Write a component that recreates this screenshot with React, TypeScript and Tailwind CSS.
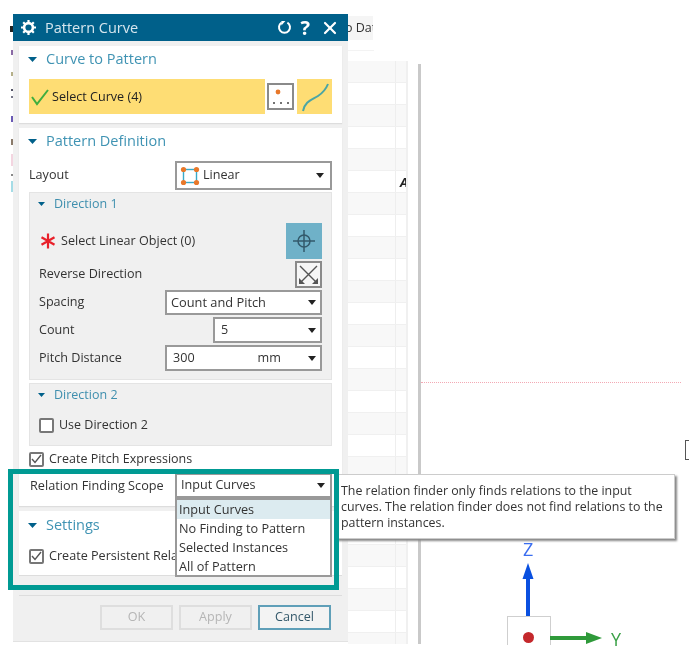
import { X } from 'lucide-react';

const gridRows = Array.from({ length: 27 }, (_, i) => i);

function Caret() {
  return (
    <svg width="8" height="5" viewBox="0 0 8 5" className="shrink-0">
      <path d="M0 0h8L4 5z" fill="#222" />
    </svg>
  );
}

function SectionHeader({ title }: { title: string }) {
  return (
    <div className="flex items-center h-[26px] pl-[9px]">
      <svg width="9" height="5" viewBox="0 0 9 5" className="mr-[9px]">
        <path d="M0 0h9L4.5 5z" fill="#00608a" />
      </svg>
      <span className="text-[14.5px] text-[#3f93b3]">{title}</span>
    </div>
  );
}

function SubHeader({ title }: { title: string }) {
  return (
    <div className="flex items-center h-[22px] pl-[8px]">
      <svg width="7" height="4" viewBox="0 0 7 4" className="mr-[9px]">
        <path d="M0 0h7L3.5 4z" fill="#00608a" />
      </svg>
      <span className="text-[12.5px] text-[#3f8fae]">{title}</span>
    </div>
  );
}

function Check({ checked }: { checked?: boolean }) {
  return (
    <span className="flex items-center justify-center w-[15px] h-[15px] border-2 border-[#777] rounded-[2px] bg-white shrink-0">
      {checked && (
        <svg width="11" height="10" viewBox="0 0 11 10">
          <path d="M1 5l3 3.5L10 1" fill="none" stroke="#555" strokeWidth="1.4" />
        </svg>
      )}
    </span>
  );
}

function ActionButton({ label, active }: { label: string; active?: boolean }) {
  return (
    <div
      className={
        active
          ? 'flex items-center justify-center w-[73px] h-[25px] border-2 border-[#5f9fb8] text-[12.6px] text-[#33586a] bg-[#f3f3f3]'
          : 'flex items-center justify-center w-[73px] h-[25px] border-2 border-[#dedede] text-[12.6px] text-[#b5b5b5] bg-[#f0f0f0]'
      }
    >
      {label}
    </div>
  );
}

export default function App() {
  return (
    <div
      className="relative flex w-[689px] h-[668px] bg-white overflow-hidden blur-[0.6px] text-[#333]"
      style={{ fontFamily: '"Open Sans", "Noto Sans", sans-serif' }}
    >
      {/* Cut-off toolbar icons left of the dialog */}
      <div className="flex flex-col items-end w-[13px] shrink-0">
        <div className="w-[3px] h-[6px] mt-[26px] bg-[#222]" />
        <div className="w-[2px] h-[5px] mt-[18px] bg-[#8a6aa5]" />
        <div className="w-[2px] h-[4px] mt-[17px] bg-[#b5b08a]" />
        <div className="w-[2px] h-[2px] mt-[13px] bg-[#556]" />
        <div className="w-[2px] h-[2px] mt-[5px] bg-[#778]" />
        <div className="w-[2px] h-[6px] mt-[18px] bg-[#6a5ab5]" />
        <div className="w-[2px] h-[6px] mt-[17px] bg-[#8a7a6a]" />
        <div className="w-[2px] h-[12px] mt-[9px] bg-[#f3d5e0]" />
        <div className="w-[2px] h-[2px] mt-[8px] bg-[#888]" />
        <div className="w-[2px] h-[11px] mt-[5px] bg-[#a5dce6]" />
      </div>

      {/* Dialog */}
      <div className="flex flex-col w-[335px] h-[628px] mt-[14px] bg-[#f0f0f0] border-b border-[#e2e2e2] shrink-0">
        <div className="flex items-center h-[27px] bg-[#00608a] pl-[8px] pr-[8px] shrink-0">
          <svg width="15" height="15" viewBox="0 0 15 15">
            <circle cx="7.5" cy="7.5" r="4.4" fill="none" stroke="#fff" strokeWidth="2.6" />
            <path
              d="M7.5 0v3M7.5 12v3M0 7.5h3M12 7.5h3M2.2 2.2l2 2M10.8 10.8l2 2M12.8 2.2l-2 2M4.2 10.8l-2 2"
              stroke="#fff"
              strokeWidth="2.2"
            />
          </svg>
          <span className="ml-[9px] text-[14.5px] text-[#d6e6ee]">Pattern Curve</span>
          <svg width="15" height="15" viewBox="0 0 15 15" className="ml-auto">
            <path d="M4.6 2.6A5.5 5.5 0 1 0 10.4 2.6" fill="none" stroke="#fff" strokeWidth="2" />
            <path d="M5.6 0.4V5H1.6z" fill="#fff" transform="rotate(180 5 3)" />
          </svg>
          <span className="ml-[8px] text-[20px] font-bold leading-none text-white">?</span>
          <X size={20} strokeWidth={2.6} className="ml-[10px] text-white" />
        </div>

        <div className="flex flex-col gap-[5px] px-[6px] pt-[5px]">
          {/* Curve to Pattern */}
          <div className="h-[77px] bg-white shadow-[0_1px_1px_#ddd]">
            <SectionHeader title="Curve to Pattern" />
            <div className="flex items-center mt-[7px] pl-[10px]">
              <div className="flex items-center w-[236px] h-[35px] bg-[#fedd74] pl-[1px]">
                <svg width="20" height="18" viewBox="0 0 20 18">
                  <path d="M2 9l5 7L18 2" fill="none" stroke="#3fae3f" strokeWidth="2" />
                </svg>
                <span className="ml-[2px] mt-[1px] text-[12.6px] text-[#222]">Select Curve (4)</span>
              </div>
              <div className="flex items-center justify-center w-[27px] h-[27px] ml-[2px] border-2 border-[#8a8a8a] bg-white">
                <svg width="23" height="23" viewBox="0 0 23 23">
                  <circle cx="9" cy="7" r="2.4" fill="#e8782a" />
                  <circle cx="5" cy="18" r="1" fill="#444" />
                  <circle cx="12" cy="18" r="1" fill="#444" />
                  <circle cx="19" cy="18" r="1" fill="#444" />
                </svg>
              </div>
              <div className="flex items-center justify-center w-[35px] h-[35px] ml-[3px] bg-[#fedd74]">
                <svg width="30" height="32" viewBox="0 0 30 32">
                  <path d="M3 30C5 20 12 19 18 15S26 8 28 3" fill="none" stroke="#4aa5a5" strokeWidth="2" />
                </svg>
              </div>
            </div>
          </div>

          {/* Pattern Definition */}
          <div className="h-[378px] bg-white shadow-[0_1px_1px_#ddd]">
            <SectionHeader title="Pattern Definition" />
            <div className="flex items-center justify-between h-[29px] mt-[7px] pl-[10px] pr-[10px]">
              <span className="text-[12.6px]">Layout</span>
              <div className="flex items-center w-[157px] h-[29px] border-2 border-[#999] bg-white pl-[3px] pr-[6px]">
                <svg width="20" height="20" viewBox="0 0 20 20" className="shrink-0">
                  <rect x="3.5" y="3.5" width="13" height="13" fill="none" stroke="#39a9c9" strokeWidth="1.4" />
                  <circle cx="3.5" cy="3.5" r="2.6" fill="#e8782a" />
                  <circle cx="16.5" cy="3.5" r="2.6" fill="#e8782a" />
                  <circle cx="3.5" cy="16.5" r="2.6" fill="#e8782a" />
                  <circle cx="16.5" cy="16.5" r="2.6" fill="#e8782a" />
                </svg>
                <span className="ml-[3px] text-[12.6px]">Linear</span>
                <span className="ml-auto"><Caret /></span>
              </div>
            </div>

            {/* Direction 1 */}
            <div className="h-[188px] mx-[10px] mt-[2px] bg-[#f0f0f0] border border-[#e4e4e4]">
              <SubHeader title="Direction 1" />
              <div className="flex items-center justify-between h-[36px] mt-[8px] pl-[10px] pr-[9px]">
                <div className="flex items-center">
                  <svg width="16" height="16" viewBox="0 0 16 16">
                    <path d="M8 0.5v15M1.5 4.2l13 7.6M14.5 4.2l-13 7.6" stroke="#e8202a" strokeWidth="2.2" />
                  </svg>
                  <span className="ml-[5px] text-[12.6px]">Select Linear Object (0)</span>
                </div>
                <div className="flex items-center justify-center w-[36px] h-[36px] bg-[#6fb1c8]">
                  <svg width="24" height="24" viewBox="0 0 24 24">
                    <circle cx="12" cy="12" r="6" fill="none" stroke="#33596b" strokeWidth="1.5" />
                    <path d="M12 1v22M1 12h22" stroke="#33596b" strokeWidth="1.5" />
                  </svg>
                </div>
              </div>
              <div className="flex items-center justify-between h-[27px] mt-[2px] pl-[9px] pr-[9px]">
                <span className="text-[12.6px]">Reverse Direction</span>
                <div className="flex items-center justify-center w-[27px] h-[27px] border-2 border-[#8a8a8a] bg-[#f6f6f6]">
                  <svg width="21" height="21" viewBox="0 0 21 21">
                    <path d="M2 2l17 17M19 2L2 19" stroke="#555" strokeWidth="1.4" />
                    <path d="M1 20v-6l6 6z" fill="#555" />
                    <path d="M20 20v-6l-6 6z" fill="#555" />
                  </svg>
                </div>
              </div>
              <div className="flex flex-col gap-[2px] mt-[2px] pl-[9px] pr-[9px]">
                <div className="flex items-center justify-between h-[25px]">
                  <span className="text-[12.6px]">Spacing</span>
                  <div className="flex items-center justify-between w-[157px] h-[25px] border-2 border-[#999] bg-white pl-[4px] pr-[4px]">
                    <span className="text-[12.8px]">Count and Pitch</span>
                    <Caret />
                  </div>
                </div>
                <div className="flex items-center justify-between h-[26px]">
                  <span className="text-[12.6px]">Count</span>
                  <div className="flex items-center justify-between w-[109px] h-[26px] border-2 border-[#999] bg-white pl-[6px] pr-[4px]">
                    <span className="text-[12.6px]">5</span>
                    <Caret />
                  </div>
                </div>
                <div className="flex items-center justify-between h-[26px]">
                  <span className="text-[12.6px] font-medium">Pitch Distance</span>
                  <div className="flex items-center w-[157px] h-[26px] border-2 border-[#999] bg-white pl-[6px] pr-[4px]">
                    <span className="text-[12.6px]">300</span>
                    <span className="ml-[63px] text-[12.6px]">mm</span>
                    <span className="ml-auto"><Caret /></span>
                  </div>
                </div>
              </div>
            </div>

            {/* Direction 2 */}
            <div className="h-[63px] mx-[10px] mt-[3px] bg-[#f0f0f0] border border-[#e4e4e4]">
              <SubHeader title="Direction 2" />
              <div className="flex items-center mt-[10px] pl-[9px]">
                <Check />
                <span className="ml-[5px] text-[12.5px]">Use Direction 2</span>
              </div>
            </div>

            <div className="flex items-center h-[18px] mt-[4px] pl-[10px]">
              <Check checked />
              <span className="ml-[5px] text-[12.5px]">Create Pitch Expressions</span>
            </div>

            <div className="flex items-center justify-between h-[25px] mt-[5px] pl-[11px] pr-[10px]">
              <span className="text-[12.7px]">Relation Finding Scope</span>
              <div className="relative flex items-center justify-between w-[157px] h-[25px] border-2 border-[#999] bg-white pl-[4px] pr-[5px]">
                <span className="text-[12.6px]">Input Curves</span>
                <Caret />
                {/* Open dropdown list */}
                <div className="absolute z-10 top-[23px] left-[-2px] w-[157px] h-[79px] flex flex-col border-2 border-[#999] bg-white text-[12.7px] leading-[19px]">
                  <div className="h-[19px] pl-[2px] bg-[#dcebf0]">Input Curves</div>
                  <div className="h-[19px] pl-[2px]">No Finding to Pattern</div>
                  <div className="h-[19px] pl-[2px]">Selected Instances</div>
                  <div className="h-[19px] pl-[2px]">All of Pattern</div>
                </div>
              </div>
            </div>
          </div>

          {/* Settings */}
          <div className="h-[65px] bg-white border-b border-[#ddd]">
            <div className="pt-px">
              <SectionHeader title="Settings" />
            </div>
            <div className="flex items-center mt-[9px] pl-[10px]">
              <Check checked />
              <span className="ml-[5px] w-[127px] overflow-hidden whitespace-nowrap text-[12.6px]">
                Create Persistent Relationships
              </span>
            </div>
          </div>
        </div>

        <div className="flex flex-1 items-start justify-end gap-[6px] mx-[6px] mt-[19px] border-t border-[#ddd] pt-[9px] pr-[11px]">
          <ActionButton label="OK" />
          <ActionButton label="Apply" />
          <ActionButton label="Cancel" active />
        </div>
      </div>

      {/* Spreadsheet strip behind the dialog */}
      <div className="flex flex-col w-[60px] h-[644px] shrink-0">
        <div className="flex items-center h-[24px] mt-[16px] bg-[#f5f5f5] text-[12.5px] text-[#333] whitespace-nowrap overflow-hidden w-[25px]">
          <span className="ml-[-3px]">o Dat</span>
        </div>
        <div className="w-[26px] h-px mt-[10px] bg-[#f3f3f3]" />
        <div className="flex flex-col flex-1 mt-[10px] border-r-2 border-[#f0f0f0] overflow-hidden">
          {gridRows.map(row => (
            <div
              key={row}
              className={
                row % 2 === 0
                  ? 'relative shrink-0 h-[22px] bg-[#f8f8f8] border-b border-[#f0f0f0]'
                  : 'relative shrink-0 h-[22px] bg-white border-b border-[#f0f0f0]'
              }
            >
              <div className="absolute top-0 bottom-0 left-[47px] w-px bg-[#eeeeee]" />
              {row === 5 && (
                <span className="absolute left-[52px] top-[1px] text-[13px] font-bold italic leading-[20px] text-[#222]">
                  A
                </span>
              )}
            </div>
          ))}
        </div>
      </div>

      <div className="w-[3px] h-[580px] mt-[64px] ml-[10px] bg-[#c9c9c9] shrink-0" />

      {/* Viewport */}
      <div className="relative flex-1">
        <div className="absolute left-0 right-[8px] top-[382px] border-t border-dotted border-[#f3a9b4]" />
        <div className="absolute right-0 top-[440px] w-[4px] h-[20px] border border-r-0 border-[#555]" />

        {/* Axis triad */}
        <span className="absolute left-[102px] top-[538px] text-[18px] leading-[22px] text-[#3b6ef0]">Z</span>
        <div className="absolute left-[86px] top-[616px] w-[44px] h-[29px] bg-white border-x border-t border-[#cfcfcf] overflow-hidden">
          <span className="absolute left-[15px] top-[15px] w-[11px] h-[11px] rounded-full bg-[#c4282c]" />
        </div>
        <svg width="14" height="54" viewBox="0 0 14 54" className="absolute left-[100px] top-[563px]">
          <path d="M5 53V16H1.5L7 0l5.5 16H9v37z" fill="#0a50e0" />
        </svg>
        <svg width="54" height="12" viewBox="0 0 54 12" className="absolute left-[129px] top-[632px]">
          <path d="M0 4h36V0l16 6-16 6V8H0z" fill="#2f9a3a" />
        </svg>
        <span className="absolute left-[190px] top-[628px] text-[18px] leading-[22px] text-[#3aa047]">Y</span>
      </div>

      {/* Hover tooltip */}
      <div className="absolute left-[336px] top-[474px] w-[339px] h-[65px] bg-white border border-[#cccccc] shadow-[2px_2px_2px_#888] pl-[4px] pt-[8px] text-[12.4px] leading-[16px] text-[#333]">
        <p>The relation finder only finds relations to the input</p>
        <p>curves. The relation finder does not find relations to the</p>
        <p>pattern instances.</p>
      </div>

      {/* Teal callout frame */}
      <div className="absolute left-[8px] top-[469px] w-[331px] h-[121px] border-[5px] border-[#009a93] z-20" />
    </div>
  );
}
